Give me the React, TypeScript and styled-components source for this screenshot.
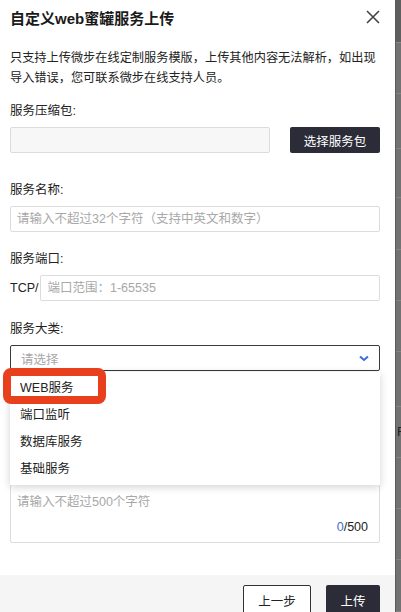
import React from "react";
import styled, { createGlobalStyle } from "styled-components";

const GlobalStyle = createGlobalStyle`
    html, body {
        margin: 0;
        padding: 0;
        overflow: hidden;
    }
    body {
        font-family: "Liberation Sans", "Noto Sans CJK SC", sans-serif;
        color: #222;
    }
`;

const Page = styled.div`
    display: flex;
    width: 401px;
    height: 612px;
`;

const Modal = styled.div`
    width: 395px;
    height: 612px;
    display: flex;
    flex-direction: column;
    background: #fff;
    flex-shrink: 0;
`;

const Backdrop = styled.div`
    flex: 1;
    background: #727272;
    border-left: 1px solid #5a5a5a;
    display: flex;
    flex-direction: column;
    overflow: hidden;
`;

const BackdropHead = styled.div`
    height: 42px;
    background: #5f5f5f;
    border-bottom: 1px solid #888;
`;

const BackdropRow = styled.div<{ $h: number }>`
    height: ${(p) => p.$h}px;
    border-bottom: 1px solid #858585;
    box-sizing: border-box;
    font-size: 13px;
    color: #222;
    display: flex;
    align-items: center;
    padding-left: 1px;
`;

const Header = styled.div`
    height: 34px;
    display: flex;
    align-items: center;
    justify-content: space-between;
    padding: 0 15px 0 10px;
`;

const Title = styled.h1`
    margin: 0;
    font-size: 15px;
    font-weight: 700;
    color: #1a1a1a;
`;

const CloseButton = styled.button`
    border: none;
    background: none;
    padding: 0;
    width: 14px;
    height: 14px;
    display: flex;
    cursor: pointer;
`;

const Body = styled.div`
    flex: 1;
    padding: 0 15px 0 10px;
`;

const Desc = styled.p`
    margin: 14px 0 0;
    font-size: 12.2px;
    line-height: 20px;
    color: #222;
    white-space: nowrap;
`;

const Field = styled.div<{ $top: number }>`
    margin-top: ${(p) => p.$top}px;
    position: relative;
`;

const Label = styled.div`
    font-size: 12.5px;
    line-height: 18px;
    color: #222;
    margin-bottom: 7px;
`;

const Row = styled.div`
    display: flex;
    align-items: center;
    gap: 20px;
`;

const Input = styled.input<{ $grey?: boolean }>`
    box-sizing: border-box;
    height: 26px;
    flex: 1;
    width: 100%;
    border: 1px solid #dcdcdc;
    border-radius: 2px;
    background: ${(p) => (p.$grey ? "#f7f7f7" : "#fff")};
    padding: 0 6px;
    font-family: inherit;
    font-size: 12.5px;
    color: #222;
    outline: none;
    &::placeholder {
        color: #a8a8a8;
    }
`;

const DarkButton = styled.button<{ $w: number; $h?: number }>`
    width: ${(p) => p.$w}px;
    height: ${(p) => p.$h ?? 26}px;
    flex-shrink: 0;
    border: none;
    border-radius: 2px;
    background: #2b2c37;
    color: #fff;
    font-family: inherit;
    font-size: 12.5px;
    cursor: pointer;
`;

const LightButton = styled.button<{ $w: number }>`
    width: ${(p) => p.$w}px;
    height: 30px;
    border: 1px solid #333;
    border-radius: 2px;
    background: #fff;
    color: #222;
    font-family: inherit;
    font-size: 12.5px;
    cursor: pointer;
`;

const Prefix = styled.span`
    font-size: 12.5px;
    color: #222;
    margin-right: 2px;
`;

const PortRow = styled.div`
    display: flex;
    align-items: center;
`;

const Select = styled.div`
    box-sizing: border-box;
    height: 26px;
    border: 1px solid #3a3a3a;
    border-radius: 2px;
    display: flex;
    align-items: center;
    justify-content: space-between;
    padding: 0 10px 0 10px;
    font-size: 12.5px;
    color: #a8a8a8;
    position: relative;
`;

const Menu = styled.ul`
    position: absolute;
    top: 26px;
    left: -1px;
    right: -1px;
    margin: 0;
    padding: 3px 0 2px;
    list-style: none;
    background: #fff;
    box-shadow: 0 2px 8px rgba(0, 0, 0, 0.18);
    z-index: 5;
`;

const MenuItem = styled.li`
    height: 27px;
    line-height: 27px;
    padding-left: 10px;
    font-size: 12.5px;
    color: #222;
`;

const Highlight = styled.div`
    position: absolute;
    left: -7px;
    top: -4px;
    width: 103px;
    height: 36px;
    box-sizing: border-box;
    border: 8px solid #e8401c;
    border-radius: 8px;
    pointer-events: none;
    z-index: 6;
`;

const TextArea = styled.div`
    box-sizing: border-box;
    height: 59px;
    border: 1px solid #dcdcdc;
    border-radius: 2px;
    padding: 8px 6px;
    font-size: 12.5px;
    line-height: 18px;
    color: #a8a8a8;
    position: relative;
`;

const Counter = styled.span`
    position: absolute;
    right: 11px;
    bottom: 6px;
    color: #222;
    & b {
        font-weight: 400;
        color: #3a6fd0;
    }
`;

const Footer = styled.div`
    height: 37px;
    background: #f5f5f5;
    display: flex;
    justify-content: flex-end;
    align-items: flex-start;
    gap: 15px;
    padding: 10px 15px 0 0;
    box-sizing: border-box;
`;

const categories = ["WEB服务", "端口监听", "数据库服务", "基础服务"];

export default function App() {
    return (
        <>
            <GlobalStyle />
            <Page>
                <Modal>
                    <Header>
                        <Title>自定义web蜜罐服务上传</Title>
                        <CloseButton aria-label="close">
                            <svg width="14" height="14" viewBox="0 0 14 14">
                                <path d="M1 1 L13 13 M13 1 L1 13" stroke="#444" strokeWidth="1.6" />
                            </svg>
                        </CloseButton>
                    </Header>
                    <Body>
                        <Desc>
                            只支持上传微步在线定制服务模版，上传其他内容无法解析，如出现
                            <br />
                            导入错误，您可联系微步在线支持人员。
                        </Desc>

                        <Field $top={14}>
                            <Label>服务压缩包:</Label>
                            <Row>
                                <Input $grey readOnly />
                                <DarkButton $w={90}>选择服务包</DarkButton>
                            </Row>
                        </Field>

                        <Field $top={28}>
                            <Label>服务名称:</Label>
                            <Input placeholder="请输入不超过32个字符（支持中英文和数字）" />
                        </Field>

                        <Field $top={18}>
                            <Label>服务端口:</Label>
                            <PortRow>
                                <Prefix>TCP/</Prefix>
                                <Input placeholder="端口范围：1-65535" />
                            </PortRow>
                        </Field>

                        <Field $top={19}>
                            <Label>服务大类:</Label>
                            <Select>
                                请选择
                                <svg width="10" height="7" viewBox="0 0 10 7">
                                    <path d="M1 1.5 L5 5 L9 1.5" fill="none" stroke="#3a6fd8" strokeWidth="2" />
                                </svg>
                                <Menu>
                                    <Highlight />
                                    {categories.map((c) => (
                                        <MenuItem key={c}>{c}</MenuItem>
                                    ))}
                                </Menu>
                            </Select>
                        </Field>

                        {/* fields between are hidden by the open menu */}
                        <Field $top={113}>
                            <TextArea>
                                请输入不超过500个字符
                                <Counter>
                                    <b>0</b>/500
                                </Counter>
                            </TextArea>
                        </Field>
                    </Body>
                    <Footer>
                        <LightButton $w={68}>上一步</LightButton>
                        <DarkButton $w={54} $h={30}>上传</DarkButton>
                    </Footer>
                </Modal>
                <Backdrop>
                    <BackdropHead />
                    <BackdropRow $h={52} />
                    <BackdropRow $h={55} />
                    <BackdropRow $h={50} />
                    <BackdropRow $h={52} />
                    <BackdropRow $h={51} />
                    <BackdropRow $h={52} />
                    <BackdropRow $h={55} />
                    <BackdropRow $h={52}>F</BackdropRow>
                    <BackdropRow $h={51} />
                    <BackdropRow $h={52} />
                    <BackdropRow $h={52} />
                </Backdrop>
            </Page>
        </>
    );
}
